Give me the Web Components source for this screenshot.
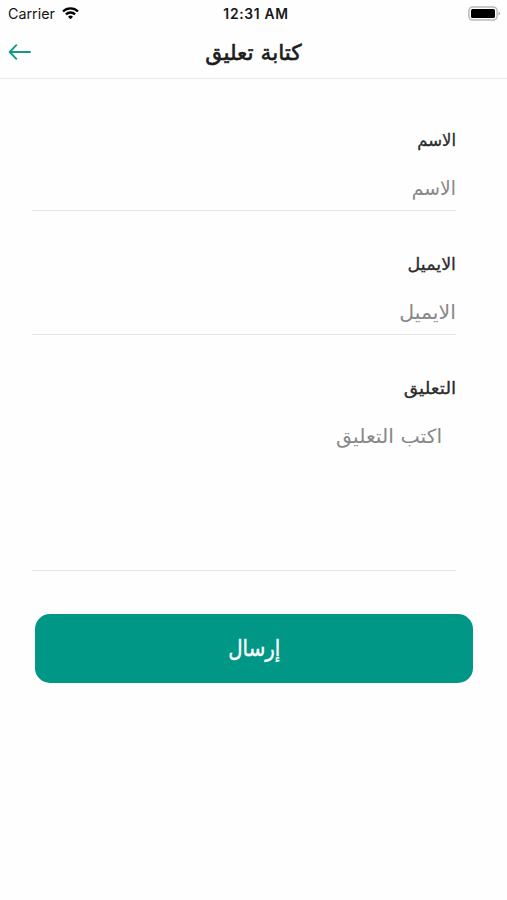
<!DOCTYPE html>
<html lang="ar">
<head>
<meta charset="UTF-8">
<title>كتابة تعليق</title>
<style>
    body {
        margin: 0;
        background: #fefefe;
        font-family: "DejaVu Sans", "Noto Sans", sans-serif;
    }
    .name {
        --label-stretch: 0.97;
        --text-stretch: 0.96;
    }
    .comment {
        --label-stretch: 1.09;
    }
</style>
</head>
<body>
<comment-screen>
    <status-bar slot="top" carrier="Carrier">12:31 AM</status-bar>
    <nav-header slot="top">كتابة تعليق</nav-header>
    <form-field class="name" label="الاسم">الاسم</form-field>
    <form-field label="الايميل">الايميل</form-field>
    <form-field class="comment" label="التعليق" multiline>اكتب التعليق</form-field>
    <submit-button slot="action">إرسال</submit-button>
</comment-screen>

<script>
class CommentScreen extends HTMLElement {
    connectedCallback() {
        this.attachShadow({ mode: 'open' });
        this.shadowRoot.innerHTML = `
            <style>
                :host {
                    display: flex;
                    flex-direction: column;
                    height: 900px;
                    overflow: hidden;
                }
                main {
                    padding: 48px 51px 0 32px;
                }
                .action {
                    padding: 43px 34px 0 35px;
                }
            </style>
            <slot name="top"></slot>
            <main><slot></slot></main>
            <div class="action"><slot name="action"></slot></div>
        `;
    }
}

class StatusBar extends HTMLElement {
    connectedCallback() {
        this.attachShadow({ mode: 'open' });
        this.shadowRoot.innerHTML = `
            <style>
                :host {
                    display: grid;
                    grid-template-columns: 1fr auto 1fr;
                    align-items: center;
                    height: 27px;
                    padding: 0 6px 0 8px;
                    box-sizing: border-box;
                    font-family: Inter, "Liberation Sans", sans-serif;
                    font-size: 14.3px;
                    color: #161616;
                }
                .carrier {
                    display: flex;
                    align-items: center;
                    gap: 7px;
                }
                .time {
                    font-weight: 600;
                    font-size: 13.8px;
                    letter-spacing: 0.7px;
                    padding-left: 3px;
                }
                .battery {
                    justify-self: end;
                }
                svg {
                    display: block;
                }
            </style>
            <div class="carrier">
                <span>${this.getAttribute('carrier')}</span>
                <svg width="17" height="13" viewBox="0 0 17 13" fill="none" stroke="#000" stroke-width="2.3">
                    <path d="M1 4.5a10.6 10.6 0 0 1 15 0"/>
                    <path d="M3.9 7.4a6.5 6.5 0 0 1 9.2 0"/>
                    <path d="M8.5 12.3L6 9.7a3.6 3.6 0 0 1 5 0z" fill="#000" stroke="none"/>
                </svg>
            </div>
            <div class="time"><slot></slot></div>
            <svg class="battery" width="33" height="15" viewBox="0 0 33 15">
                <rect x="0.9" y="0.9" width="28.2" height="13.2" rx="4" fill="#fff" stroke="#b9b9b9" stroke-width="1.5"/>
                <rect x="3" y="3" width="24" height="9" rx="1.5" fill="#000"/>
                <path d="M30.6 5.5c1.8.6 1.8 3.4 0 4z" fill="#999"/>
            </svg>
        `;
    }
}

class NavHeader extends HTMLElement {
    connectedCallback() {
        this.attachShadow({ mode: 'open' });
        this.shadowRoot.innerHTML = `
            <style>
                :host {
                    display: grid;
                    grid-template-columns: 1fr auto 1fr;
                    align-items: center;
                    height: 52px;
                    padding: 0 8px;
                    box-sizing: border-box;
                    border-bottom: 1px solid #e9e9e9;
                }
                h1 {
                    margin: 0;
                    font-size: 21.7px;
                    font-weight: normal;
                    color: #1c1c1c;
                    -webkit-text-stroke: 0.6px;
                }
                svg {
                    display: block;
                    margin-bottom: 2px;
                }
            </style>
            <svg width="24" height="16" viewBox="0 0 24 16" fill="none" stroke="#12998a" stroke-width="1.9" stroke-linecap="round" stroke-linejoin="round">
                <path d="M22 8H2M8.3 1.2L1.7 8l6.6 6.8"/>
            </svg>
            <h1 dir="rtl"><slot></slot></h1>
        `;
    }
}

class FormField extends HTMLElement {
    connectedCallback() {
        this.attachShadow({ mode: 'open' });
        this.shadowRoot.innerHTML = `
            <style>
                :host {
                    display: block;
                    direction: rtl;
                    height: 124px;
                }
                :host([multiline]) {
                    height: 196px;
                }
                :host([multiline]) .control {
                    height: 147px;
                    padding-right: 14px;
                }
                .label {
                    height: 26px;
                    line-height: 26px;
                    font-size: 17px;
                    color: #2b2b2b;
                    -webkit-text-stroke: 0.3px;
                }
                .label span,
                .control span {
                    display: inline-block;
                    transform-origin: right;
                }
                .label span {
                    transform: scaleX(var(--label-stretch, 1.03));
                }
                .control {
                    height: 35px;
                    padding: 22px 0 0;
                    line-height: 28px;
                    font-size: 19.5px;
                    color: #888;
                    border-bottom: 1px solid #e6e6e6;
                }
                .control span {
                    transform: scaleX(var(--text-stretch, 1.05));
                }
            </style>
            <div class="label"><span>${this.getAttribute('label')}</span></div>
            <div class="control"><span><slot></slot></span></div>
        `;
    }
}

class SubmitButton extends HTMLElement {
    connectedCallback() {
        this.attachShadow({ mode: 'open' });
        this.shadowRoot.innerHTML = `
            <style>
                :host {
                    display: block;
                }
                button {
                    display: flex;
                    align-items: center;
                    justify-content: center;
                    width: 100%;
                    height: 69px;
                    padding: 0 0 2px;
                    border: none;
                    border-radius: 15px;
                    background: #009787;
                    color: #fff;
                    font-family: inherit;
                    font-size: 23px;
                    -webkit-text-stroke: 0.4px;
                }
                span {
                    transform: scaleX(0.86);
                }
            </style>
            <button dir="rtl"><span><slot></slot></span></button>
        `;
    }
}

customElements.define('comment-screen', CommentScreen);
customElements.define('status-bar', StatusBar);
customElements.define('nav-header', NavHeader);
customElements.define('form-field', FormField);
customElements.define('submit-button', SubmitButton);
</script>
</body>
</html>
